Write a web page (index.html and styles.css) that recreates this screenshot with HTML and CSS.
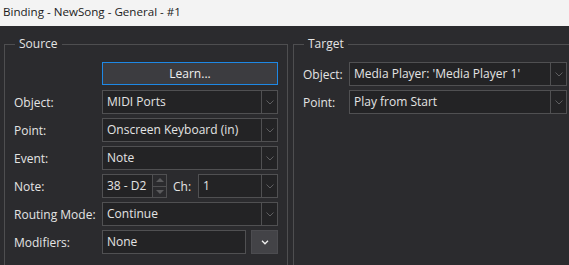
FILE: index.html
```html
<!DOCTYPE html>
<html lang="en">
<head>
    <meta charset="UTF-8">
    <title>Binding - NewSong - General - #1</title>
    <link rel="stylesheet" href="styles.css">
</head>
<body>
    <div class="titlebar">Binding - NewSong - General - #1</div>

    <div class="dialog">
        <fieldset class="group">
            <legend>Source</legend>
            <div class="form source-form">
                <span></span>
                <button class="learn-button">Learn...</button>

                <label>Object:</label>
                <div class="combo">
                    <span class="combo-value">MIDI Ports</span>
                    <span class="combo-drop"><svg width="8" height="5" viewBox="0 0 8 5"><path d="M0.5 0.5l3.5 3.5 3.5-3.5" /></svg></span>
                </div>

                <label>Point:</label>
                <div class="combo">
                    <span class="combo-value">Onscreen Keyboard (in)</span>
                    <span class="combo-drop"><svg width="8" height="5" viewBox="0 0 8 5"><path d="M0.5 0.5l3.5 3.5 3.5-3.5" /></svg></span>
                </div>

                <label>Event:</label>
                <div class="combo">
                    <span class="combo-value">Note</span>
                    <span class="combo-drop"><svg width="8" height="5" viewBox="0 0 8 5"><path d="M0.5 0.5l3.5 3.5 3.5-3.5" /></svg></span>
                </div>

                <label>Note:</label>
                <div class="note-row">
                    <div class="spin">
                        <span class="spin-value">38 - D2</span>
                        <span class="spin-buttons">
                            <span class="spin-up"></span>
                            <span class="spin-down"></span>
                        </span>
                    </div>
                    <label class="ch-label">Ch:</label>
                    <div class="combo ch-combo">
                        <span class="combo-value">1</span>
                        <span class="combo-drop"><svg width="8" height="5" viewBox="0 0 8 5"><path d="M0.5 0.5l3.5 3.5 3.5-3.5" /></svg></span>
                    </div>
                </div>

                <label>Routing Mode:</label>
                <div class="combo">
                    <span class="combo-value">Continue</span>
                    <span class="combo-drop"><svg width="8" height="5" viewBox="0 0 8 5"><path d="M0.5 0.5l3.5 3.5 3.5-3.5" /></svg></span>
                </div>

                <label>Modifiers:</label>
                <div class="modifier-row">
                    <div class="text-field">None</div>
                    <button class="drop-button"><svg width="8" height="5" viewBox="0 0 8 5"><path d="M1 0.8l3 3 3-3" /></svg></button>
                </div>
            </div>
        </fieldset>

        <fieldset class="group">
            <legend>Target</legend>
            <div class="form target-form">
                <label>Object:</label>
                <div class="combo">
                    <span class="combo-value">Media Player: 'Media Player 1'</span>
                    <span class="combo-drop"><svg width="8" height="5" viewBox="0 0 8 5"><path d="M0.5 0.5l3.5 3.5 3.5-3.5" /></svg></span>
                </div>

                <label>Point:</label>
                <div class="combo">
                    <span class="combo-value">Play from Start</span>
                    <span class="combo-drop"><svg width="8" height="5" viewBox="0 0 8 5"><path d="M0.5 0.5l3.5 3.5 3.5-3.5" /></svg></span>
                </div>
            </div>
        </fieldset>
    </div>
</body>
</html>
```

FILE: styles.css
```css
:root {
    --bg: #2b2b2e;
    --field-bg: #232325;
    --border: #505052;
    --text: #e4e4e4;
    --accent: #1e88e5;
}

* {
    margin: 0;
    padding: 0;
    box-sizing: border-box;
}

body {
    font-family: 'Open Sans', 'Noto Sans', sans-serif;
    font-size: 12px;
    background: var(--bg);
    color: var(--text);
    width: 569px;
    height: 265px;
    overflow: hidden;
}

.titlebar {
    height: 26px;
    line-height: 24px;
    padding-left: 3px;
    font-size: 11.6px;
    background: #f3f3f3;
    color: #1b1b1b;
}

/* the group boxes run on below the window edge */
.dialog {
    display: flex;
    gap: 5px;
    padding-left: 4px;
    height: 239px;
    overflow: hidden;
}

.group {
    width: 284px;
    flex-shrink: 0;
    margin-top: 10px;
    height: 240px;
    border: 1px solid #4e4e50;
    padding: 10px 9px 0 9px;
}

.group legend {
    line-height: 16px;
    padding: 0 4px;
    margin-left: 1px;
}

.form {
    display: grid;
    grid-auto-rows: 24px;
    row-gap: 4px;
    align-items: center;
}

.source-form {
    grid-template-columns: 88px 176px;
}

.target-form {
    grid-template-columns: 46px 218px;
}

.learn-button {
    height: 23px;
    align-self: start;
    border: 1px solid var(--accent);
    background: #3c3c40;
    color: #f0f0f0;
    font: inherit;
}

.combo {
    display: flex;
    height: 24px;
    border: 1px solid var(--border);
    background: var(--field-bg);
}

.combo-value {
    flex: 1;
    padding-left: 4px;
    line-height: 22px;
    white-space: nowrap;
    overflow: hidden;
}

.combo-drop {
    width: 16px;
    border-left: 1px solid var(--border);
    display: flex;
    align-items: center;
    justify-content: center;
}

.combo-drop svg path {
    fill: none;
    stroke: #5e5e60;
    stroke-width: 1;
}

.note-row {
    display: flex;
    align-items: center;
    height: 24px;
}

.spin {
    display: flex;
    width: 65px;
    height: 24px;
}

.spin-value {
    width: 51px;
    padding-left: 4px;
    line-height: 22px;
    border: 1px solid var(--border);
    background: var(--field-bg);
}

.spin-buttons {
    width: 14px;
    display: flex;
    flex-direction: column;
    border: 1px solid var(--border);
    border-left: none;
}

.spin-up,
.spin-down {
    flex: 1;
    display: flex;
    align-items: center;
    justify-content: center;
}

.spin-up {
    border-bottom: 1px solid var(--border);
}

.spin-up::before,
.spin-down::before {
    content: '';
    border-left: 4px solid transparent;
    border-right: 4px solid transparent;
}

.spin-up::before {
    border-bottom: 4px solid #5a5a5c;
}

.spin-down::before {
    border-top: 4px solid #5a5a5c;
}

.ch-label {
    margin-left: 6px;
    width: 25px;
}

.ch-combo {
    width: 80px;
}

.modifier-row {
    display: flex;
    gap: 5px;
    height: 24px;
}

.text-field {
    width: 144px;
    padding-left: 4px;
    line-height: 22px;
    border: 1px solid var(--border);
    background: var(--field-bg);
}

.drop-button {
    width: 27px;
    border: 1px solid #4c4c50;
    background: #434347;
    display: flex;
    align-items: center;
    justify-content: center;
}

.drop-button svg path {
    fill: none;
    stroke: #f0f0f0;
    stroke-width: 1.3;
}
```
